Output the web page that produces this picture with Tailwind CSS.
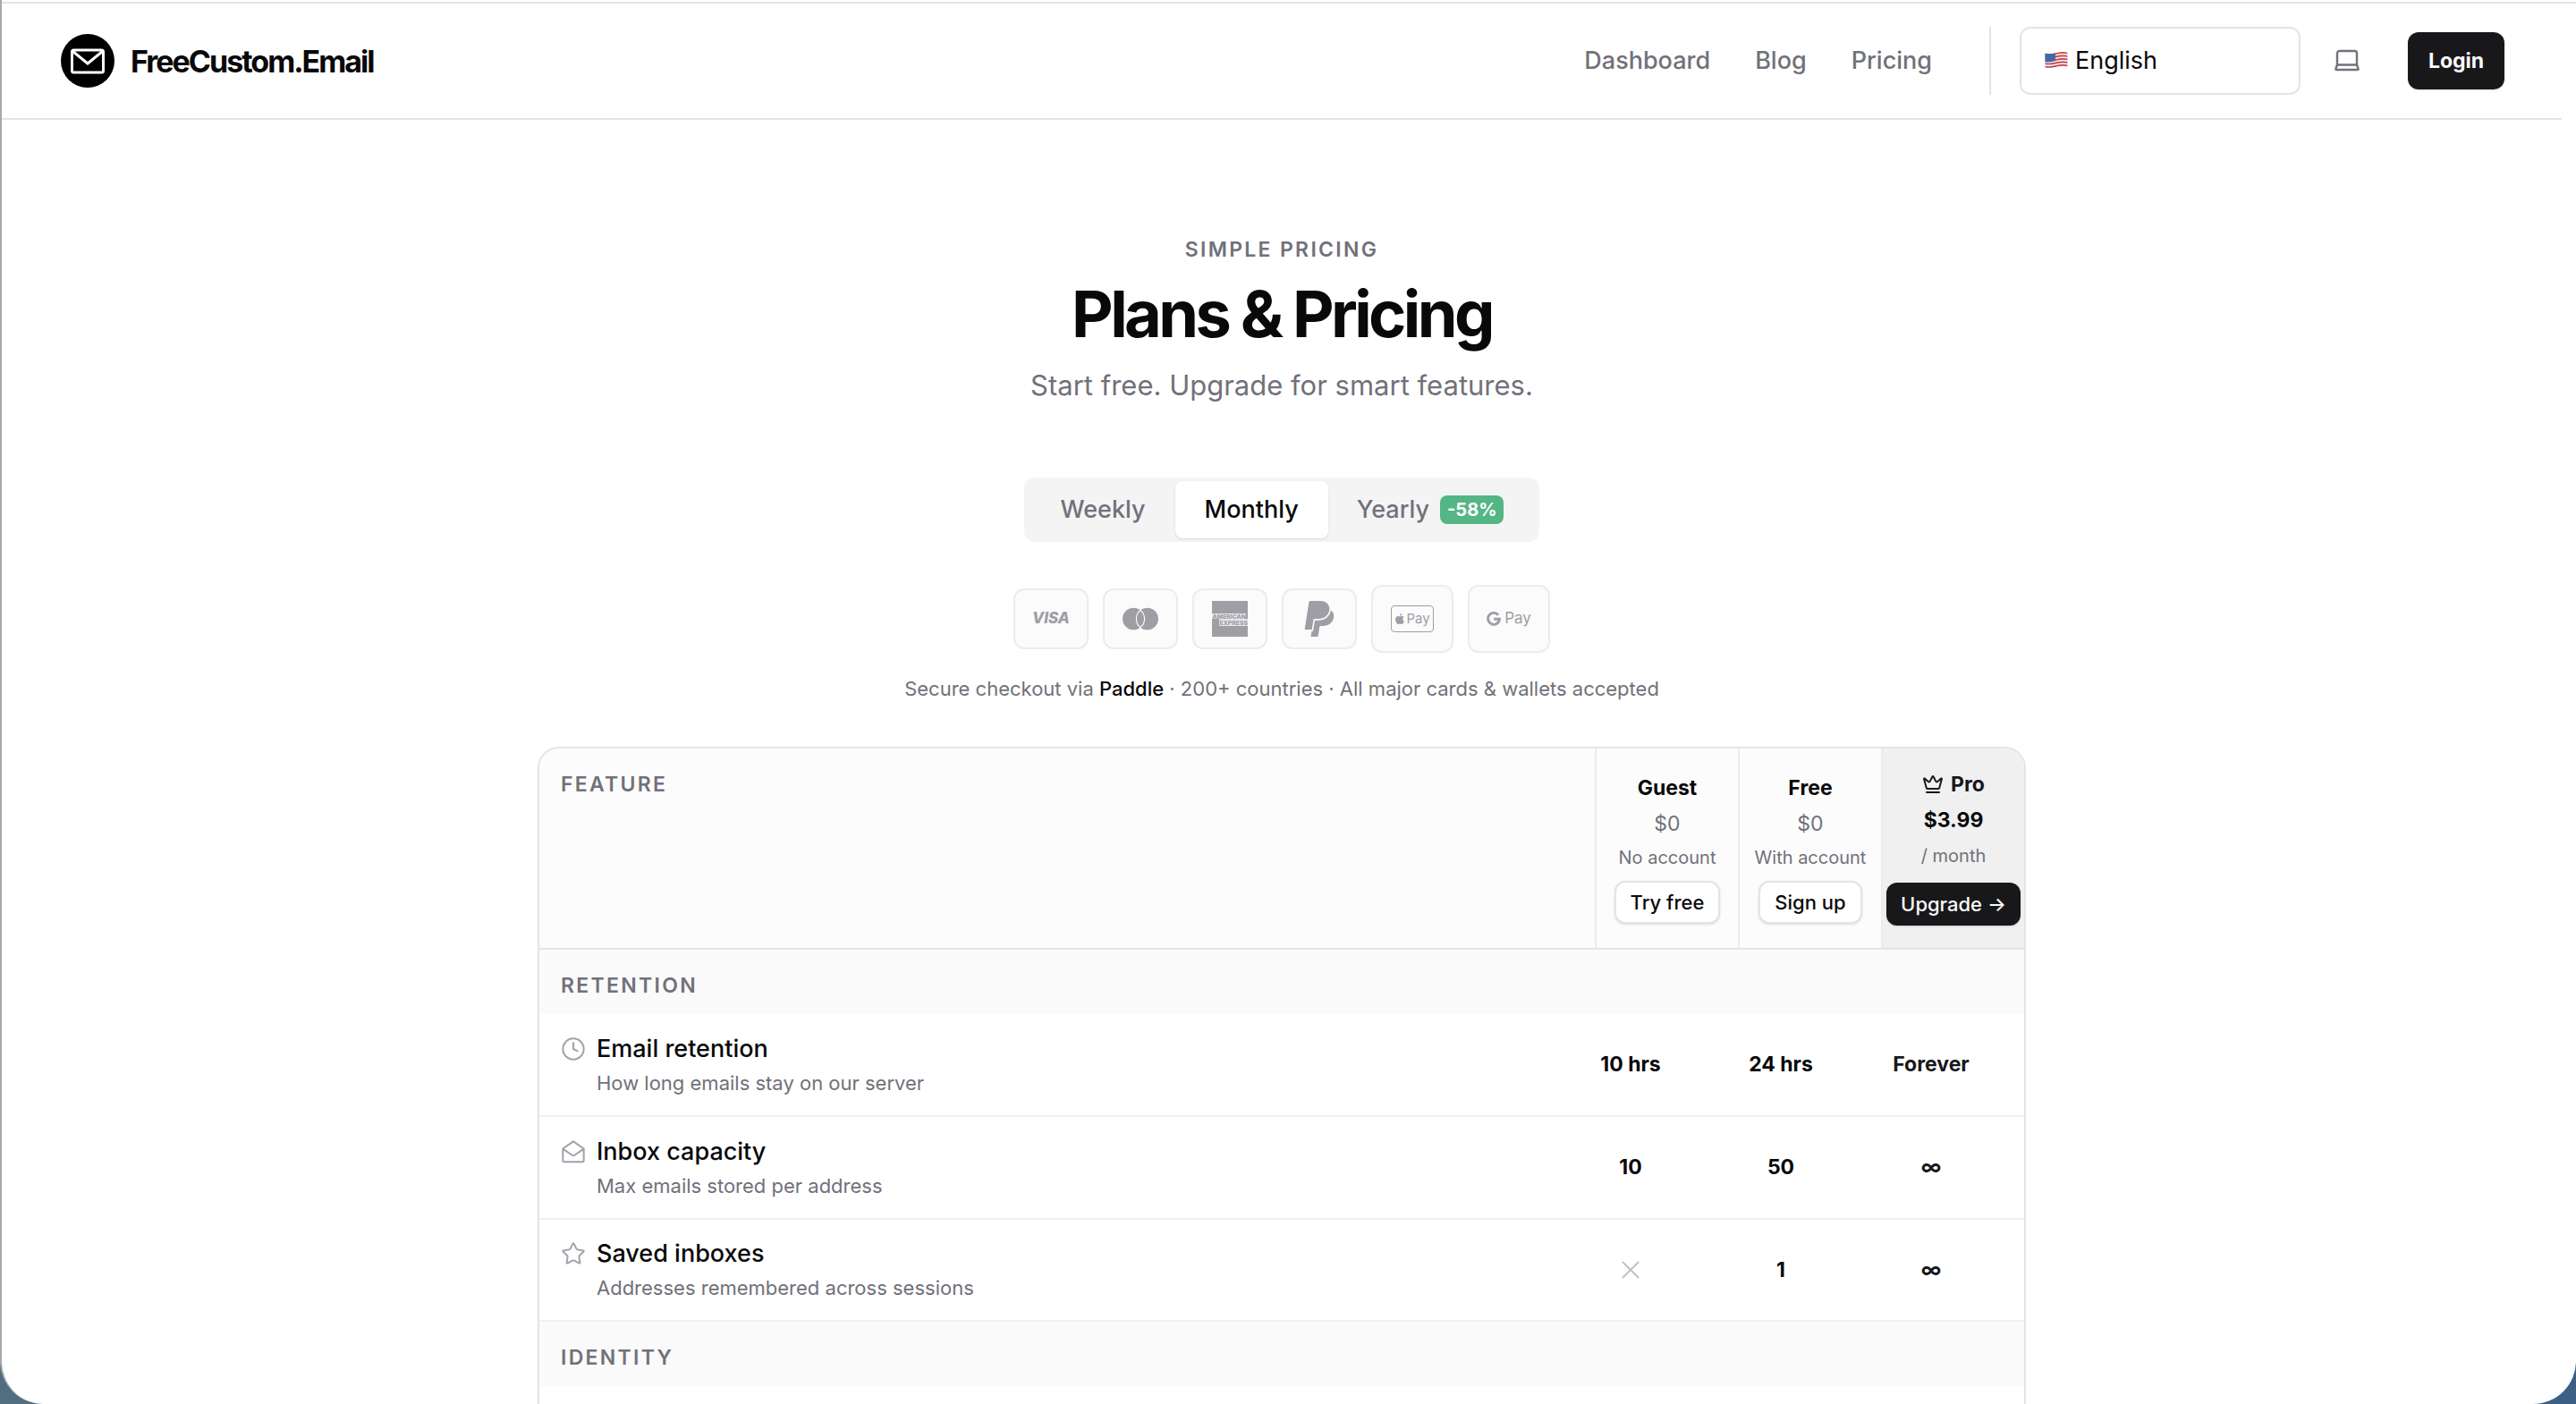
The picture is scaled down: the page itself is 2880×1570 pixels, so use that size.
<!DOCTYPE html>
<html lang="en">
<head>
<meta charset="utf-8">
<meta name="viewport" content="width=device-width, initial-scale=1">
<title>Plans &amp; Pricing – FreeCustom.Email</title>
<script src="https://cdn.jsdelivr.net/npm/@tailwindcss/browser@4"></script>
</head>
<body class="bg-linear-to-r from-[#506e80] to-[#3c5f84] font-[Inter,sans-serif] text-[#09090b] antialiased">
<div class="h-screen overflow-hidden rounded-b-[48px] border-l-2 border-[#a8a8a8] bg-white pt-[2px]">
  <div class="border-t-2 border-[#e4e4e4]">
    <header class="mr-4 flex h-[130px] items-center justify-between border-b-2 border-[#e4e4e4] pr-16 pl-[66px]">
      <a href="#" class="flex items-center gap-[18px]">
        <svg class="size-15" viewBox="0 0 60 60" aria-hidden="true">
          <circle cx="30" cy="30" r="30" fill="#000"/>
          <rect x="12.500" y="18" width="35" height="25" rx="2" fill="none" stroke="#fff" stroke-width="3"/>
          <path d="M13.500 19.500 30 33l16.500-13.500" fill="none" stroke="#fff" stroke-width="3"/>
        </svg>
        <span class="text-[34px] font-bold tracking-[-2px]">FreeCustom.Email</span>
      </a>
      <div class="flex items-center">
        <nav class="flex items-center gap-[50px] pt-px text-[27px] font-medium text-[#71717a]">
          <a href="#">Dashboard</a>
          <a href="#">Blog</a>
          <a href="#">Pricing</a>
        </nav>
        <div class="ml-16 h-[76px] border-l-2 border-[#e4e4e4]"></div>
        <div class="relative ml-8">
          <svg class="pointer-events-none absolute top-[26px] left-7 h-[22px] w-[26px]" viewBox="0 0 26 22" aria-hidden="true">
            <defs><clipPath id="wave"><path d="M.5 3.500C8 6.500 15 0 25.500 2.500V18.500C16 16 9 22 .5 19.500Z"/></clipPath></defs>
            <g clip-path="url(#wave)">
              <rect width="26" height="22" fill="#f3eeee"/>
              <path d="M0 4.500C8 7 15 1 26 3.500M0 8C8 10.500 15 4.500 26 7M0 11.500C8 14 15 8 26 10.500M0 15C8 17.500 15 11.500 26 14M0 18.500C8 21 15 15 26 17.500" fill="none" stroke="#c8414b" stroke-width="1.700"/>
              <path d="M0 3C4 5 8 4 12 2.500V12C8 13.500 4 14 0 13Z" fill="#4468a8"/>
            </g>
          </svg>
          <select aria-label="Language" class="h-[76px] w-[314px] appearance-none rounded-xl border-2 border-[#e4e4e4] bg-white pt-px pl-[60px] text-[27px]">
            <option>English</option>
          </select>
        </div>
        <button aria-label="Theme" class="ml-5 flex size-16 items-center justify-center text-[#71717a]">
          <svg class="size-7" viewBox="0 0 28 28" fill="none" stroke="currentColor" stroke-width="2.400" stroke-linejoin="round" aria-hidden="true">
            <path d="M3 18.500V5.500a2.500 2.500 0 0 1 2.500-2.500h17A2.500 2.500 0 0 1 25 5.500V18.500M3 18.500h22l1.500 4.200c.3.900-.1 1.300-1 1.300H2.500c-.9 0-1.300-.4-1-1.300Z"/>
          </svg>
        </button>
        <button class="ml-9 h-16 w-[108px] rounded-xl bg-[#18181b] text-[23px] font-bold text-[#fafafa] shadow">Login</button>
      </div>
    </header>

    <main class="mr-4 flex flex-col items-center pt-[129px]">
      <p class="text-[23px] leading-8 font-semibold tracking-widest text-[#71717a]">SIMPLE PRICING</p>
      <h1 class="mt-4 text-[72px] leading-[80px] font-bold tracking-tighter">Plans &amp; Pricing</h1>
      <p class="mt-4 text-[31px] leading-12 text-[#71717a]">Start free. Upgrade for smart features.</p>

      <div class="mt-[79px] flex h-[72px] rounded-xl bg-[#f4f4f5] px-2 py-1 text-[27px] font-medium text-[#71717a]">
        <button class="px-[33px]">Weekly</button>
        <button class="rounded-lg bg-white px-[33px] text-[#09090b] shadow-sm">Monthly</button>
        <button class="flex items-center gap-3 px-8">Yearly <span class="rounded-lg bg-[#54b585] px-2 text-[20px] leading-8 font-bold text-white">-58%</span></button>
      </div>

      <ul class="mt-12 flex items-center gap-4 text-[#9f9ea5]" aria-label="Payment methods">
        <li class="flex h-[68px] w-[84px] items-center justify-center rounded-xl border-2 border-[#ececec] bg-[#fbfbfb] text-[17px] font-extrabold italic">VISA</li>
        <li class="flex h-[68px] w-[84px] items-center justify-center rounded-xl border-2 border-[#ececec] bg-[#fbfbfb]">
          <svg class="size-10" viewBox="0 0 40 40" role="img" aria-label="Mastercard">
            <circle cx="12.300" cy="20" r="12.300" fill="currentColor"/><circle cx="27.700" cy="20" r="12.300" fill="currentColor"/>
            <path d="M20 10.400a12.300 12.300 0 0 1 0 19.200a12.300 12.300 0 0 1 0-19.200Z" fill="currentColor" stroke="#fbfbfb" stroke-width="1.200"/>
          </svg>
        </li>
        <li class="flex h-[68px] w-[84px] items-center justify-center rounded-xl border-2 border-[#ececec] bg-[#fbfbfb]">
          <svg class="size-10" viewBox="0 0 40 40" role="img" aria-label="American Express">
            <path d="M0 0H40V40H0Z" fill="currentColor"/>
            <path d="M0 14H38V20H40V28H8V20H0Z" fill="#e6e6e8"/>
            <text x="0.500" y="19.700" font-size="6.800" font-weight="800" fill="currentColor">AMERICAN</text>
            <text x="8.500" y="26.700" font-size="6.800" font-weight="800" fill="currentColor">EXPRESS</text>
          </svg>
        </li>
        <li class="flex h-[68px] w-[84px] items-center justify-center rounded-xl border-2 border-[#ececec] bg-[#fbfbfb]">
          <svg class="size-10" viewBox="0 0 24 24" fill="currentColor" role="img" aria-label="PayPal">
            <path d="M7.016 19.198h-4.200a.562.562 0 0 1-.555-.65L5.093.584A.692.692 0 0 1 5.776 0h7.222c3.417 0 5.904 2.488 5.846 5.500-.006.25-.027.5-.066.747A6.794 6.794 0 0 1 12.071 12H8.743a.69.690 0 0 0-.682.583l-.325 2.056-.013.083-.692 4.390-.015.087zM19.790 6.142c-.01.087-.01.175-.023.261a7.760 7.760 0 0 1-7.695 6.598H9.007l-.283 1.795-.013.083-.692 4.390-.134.843-.014.088H6.860l-.497 3.150a.562.562 0 0 0 .555.65h3.612c.34 0 .63-.249.683-.585l.952-6.031a.692.692 0 0 1 .683-.584h2.126a6.793 6.793 0 0 0 6.707-5.752c.306-1.950-.466-3.744-1.890-4.906z"/>
          </svg>
        </li>
        <li class="flex h-[76px] w-[92px] items-center justify-center rounded-xl border-2 border-[#ececec] bg-[#fbfbfb]">
          <span class="flex h-[30px] w-12 items-center justify-center rounded border border-current text-[15px]">
            <svg class="mr-px size-3" viewBox="0 0 24 24" fill="currentColor" aria-hidden="true"><path d="M12.152 6.896c-.948 0-2.415-1.078-3.960-1.040-2.040.027-3.910 1.183-4.961 3.014-2.117 3.675-.546 9.103 1.519 12.090 1.013 1.454 2.208 3.090 3.792 3.039 1.520-.065 2.090-.987 3.935-.987 1.831 0 2.350.987 3.960.948 1.637-.026 2.676-1.480 3.676-2.948 1.156-1.688 1.636-3.325 1.662-3.415-.039-.013-3.182-1.221-3.220-4.857-.026-3.040 2.480-4.494 2.597-4.559-1.429-2.090-3.623-2.324-4.390-2.376-2-.156-3.675 1.090-4.610 1.090zM15.530 3.830c.843-1.012 1.400-2.427 1.245-3.830-1.207.052-2.662.805-3.532 1.818-.780.896-1.454 2.338-1.273 3.714 1.338.104 2.715-.688 3.559-1.701"/></svg>
            Pay
          </span>
        </li>
        <li class="flex h-[76px] w-[92px] items-center justify-center gap-1 rounded-xl border-2 border-[#ececec] bg-[#fbfbfb] text-[17px]">
          <svg class="size-4" viewBox="0 0 24 24" fill="none" stroke="currentColor" stroke-width="4.400" aria-hidden="true"><path d="M19.500 5.600A9.700 9.700 0 1 0 21.700 12.500H12.300"/></svg>
          Pay
        </li>
      </ul>

      <p class="mt-6 text-[22px] leading-8 text-[#71717a]">Secure checkout via <a href="#" class="font-medium text-[#09090b]">Paddle</a> · 200+ countries · All major cards &amp; wallets accepted</p>

      <div class="mt-[49px] w-full max-w-[1664px] overflow-hidden rounded-t-3xl border-2 border-[#e4e4e4]">
        <table class="w-full table-fixed border-separate border-spacing-0">
          <colgroup><col><col class="w-40"><col class="w-40"><col class="w-40"></colgroup>
          <thead>
            <tr class="h-[225px] bg-[#fcfcfc] align-top">
              <th scope="col" class="border-b-2 border-[#e4e4e4] px-6 pt-6 text-left text-[23px] leading-8 font-semibold tracking-widest text-[#71717a]">FEATURE</th>
              <th scope="col" class="border-b-2 border-l-2 border-b-[#e4e4e4] border-l-[#ececec] pt-7 font-normal">
                <div class="flex flex-col items-center whitespace-nowrap">
                  <span class="text-[23px] leading-8 font-bold">Guest</span>
                  <span class="mt-2 text-[23px] leading-8 text-[#71717a]">$0</span>
                  <span class="mt-2 text-[20px] leading-7 text-[#71717a]">No account</span>
                  <button class="mt-3 h-12 rounded-xl border-2 border-[#e4e4e4] bg-white px-4 text-[22px] font-medium shadow-sm">Try free</button>
                </div>
              </th>
              <th scope="col" class="border-b-2 border-l-2 border-b-[#e4e4e4] border-l-[#ececec] pt-7 font-normal">
                <div class="flex flex-col items-center whitespace-nowrap">
                  <span class="text-[23px] leading-8 font-bold">Free</span>
                  <span class="mt-2 text-[23px] leading-8 text-[#71717a]">$0</span>
                  <span class="mt-2 text-[20px] leading-7 text-[#71717a]">With account</span>
                  <button class="mt-3 h-12 rounded-xl border-2 border-[#e4e4e4] bg-white px-4 text-[22px] font-medium shadow-sm">Sign up</button>
                </div>
              </th>
              <th scope="col" class="border-b-2 border-l-2 border-b-[#e4e4e4] border-l-[#ececec] bg-[#f0f0f0] pt-6 font-normal">
                <div class="flex flex-col items-center whitespace-nowrap">
                  <span class="flex items-center gap-2 text-[23px] leading-8 font-bold text-[#18181b]">
                    <svg class="size-6" viewBox="0 0 24 24" fill="none" stroke="currentColor" stroke-width="2" stroke-linecap="round" stroke-linejoin="round" aria-hidden="true"><path d="M11.562 3.266a.5.500 0 0 1 .876 0L15.390 8.870a1 1 0 0 0 1.516.294L21.183 5.500a.5.500 0 0 1 .798.519l-2.834 10.246a1 1 0 0 1-.956.734H5.810a1 1 0 0 1-.957-.734L2.020 6.020a.5.500 0 0 1 .798-.519l4.276 3.664a1 1 0 0 0 1.516-.294zM5 21h14"/></svg>
                    Pro
                  </span>
                  <span class="mt-2 text-[23px] leading-8 font-bold">$3.99</span>
                  <span class="mt-2.5 text-[20px] leading-7 text-[#71717a]">/ month</span>
                  <button class="mt-4 h-12 rounded-xl bg-[#18181b] px-4 text-[22px] font-medium text-[#fafafa] shadow">Upgrade →</button>
                </div>
              </th>
            </tr>
          </thead>
          <tbody>
            <tr class="h-[72px] bg-[#fafafa]"><th colspan="4" scope="colgroup" class="px-6 pt-2 text-left text-[23px] font-semibold tracking-widest text-[#71717a]">RETENTION</th></tr>
            <tr class="h-[115px]">
              <th scope="row" class="border-b-2 border-[#f0f0f0] px-6 text-left font-normal">
                <div class="flex gap-3">
                  <svg class="mt-1 size-7 text-[#a1a1aa]" viewBox="0 0 24 24" fill="none" stroke="currentColor" stroke-width="1.700" stroke-linecap="round" stroke-linejoin="round" aria-hidden="true"><circle cx="12" cy="12" r="10"/><path d="M12 6v6l4 2"/></svg>
                  <div><p class="text-[27px] leading-9 font-medium">Email retention</p><p class="mt-1 text-[22px] leading-8 text-[#71717a]">How long emails stay on our server</p></div>
                </div>
              </th>
              <td class="border-b-2 border-[#f0f0f0] pr-20 text-center text-[23px] font-bold whitespace-nowrap">10 hrs</td>
              <td class="border-b-2 border-[#f0f0f0] pr-16 text-center text-[23px] font-bold whitespace-nowrap">24 hrs</td>
              <td class="border-b-2 border-[#f0f0f0] pr-12 text-center text-[23px] font-bold text-[#18181b]">Forever</td>
            </tr>
            <tr class="h-[115px]">
              <th scope="row" class="border-b-2 border-[#f0f0f0] px-6 text-left font-normal">
                <div class="flex gap-3">
                  <svg class="mt-1 size-7 text-[#a1a1aa]" viewBox="0 0 24 24" fill="none" stroke="currentColor" stroke-width="1.700" stroke-linecap="round" stroke-linejoin="round" aria-hidden="true"><path d="M2 9 12 2l10 7v11.500a1.200 1.200 0 0 1-1.200 1.200H3.200A1.200 1.200 0 0 1 2 20.500ZM2.200 9.300 10.800 15.200a2 2 0 0 0 2.400 0L21.800 9.300"/></svg>
                  <div><p class="text-[27px] leading-9 font-medium">Inbox capacity</p><p class="mt-1 text-[22px] leading-8 text-[#71717a]">Max emails stored per address</p></div>
                </div>
              </th>
              <td class="border-b-2 border-[#f0f0f0] pr-20 text-center text-[23px] font-bold">10</td>
              <td class="border-b-2 border-[#f0f0f0] pr-16 text-center text-[23px] font-bold">50</td>
              <td class="border-b-2 border-[#f0f0f0] pr-12 text-center text-[23px] font-bold text-[#18181b]">∞</td>
            </tr>
            <tr class="h-[114px]">
              <th scope="row" class="border-b-2 border-[#f0f0f0] px-6 text-left font-normal">
                <div class="flex gap-3">
                  <svg class="mt-1 size-7 text-[#a1a1aa]" viewBox="0 0 24 24" fill="none" stroke="currentColor" stroke-width="1.700" stroke-linecap="round" stroke-linejoin="round" aria-hidden="true"><path d="M11.525 2.295a.53.530 0 0 1 .95 0l2.310 4.679a2.123 2.123 0 0 0 1.595 1.160l5.166.756a.53.530 0 0 1 .294.904l-3.736 3.638a2.123 2.123 0 0 0-.611 1.878l.882 5.140a.53.530 0 0 1-.771.560l-4.618-2.428a2.122 2.122 0 0 0-1.973 0L6.396 21.010a.53.530 0 0 1-.770-.560l.881-5.139a2.122 2.122 0 0 0-.611-1.879L2.160 9.795a.53.530 0 0 1 .294-.906l5.165-.755a2.122 2.122 0 0 0 1.597-1.160z"/></svg>
                  <div><p class="text-[27px] leading-9 font-medium">Saved inboxes</p><p class="mt-1 text-[22px] leading-8 text-[#71717a]">Addresses remembered across sessions</p></div>
                </div>
              </th>
              <td class="border-b-2 border-[#f0f0f0] pr-20"><svg class="mx-auto size-7 text-[#c0c0c6]" viewBox="0 0 28 28" fill="none" stroke="currentColor" stroke-width="2" stroke-linecap="round" role="img" aria-label="Not included"><path d="M5.500 5.500l17 17M22.500 5.500l-17 17"/></svg></td>
              <td class="border-b-2 border-[#f0f0f0] pr-16 text-center text-[23px] font-bold">1</td>
              <td class="border-b-2 border-[#f0f0f0] pr-12 text-center text-[23px] font-bold text-[#18181b]">∞</td>
            </tr>
            <tr class="h-[72px] bg-[#fafafa]"><th colspan="4" scope="colgroup" class="px-6 pt-2 text-left text-[23px] font-semibold tracking-widest text-[#71717a]">IDENTITY</th></tr>
            <tr class="h-[115px]"><td colspan="4"></td></tr>
          </tbody>
        </table>
      </div>
    </main>
  </div>
</div>
</body>
</html>
